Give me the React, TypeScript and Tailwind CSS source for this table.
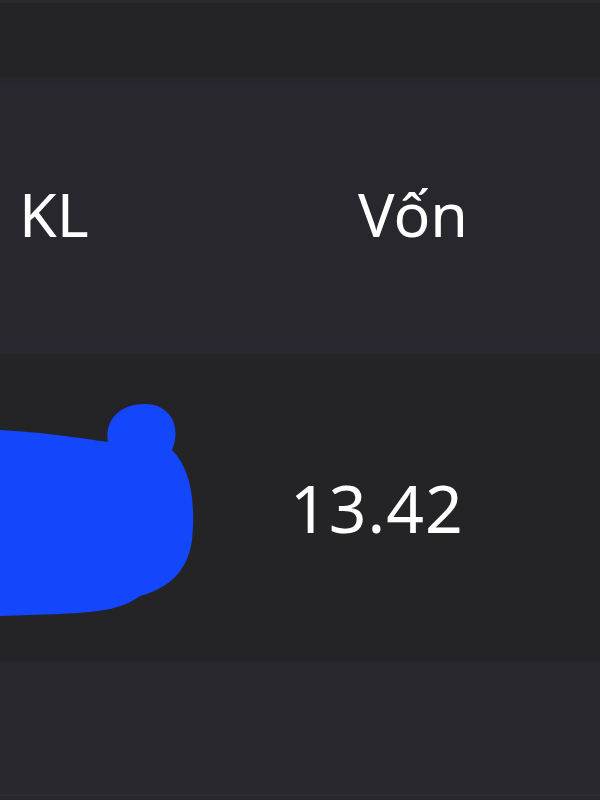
import React from "react";

export default function App() {
  return (
    <div
      className="w-[600px] h-[800px] overflow-hidden flex flex-col bg-[#28272d] text-white"
      style={{ fontFamily: '"Noto Sans", "Open Sans", sans-serif' }}
    >
      <div className="h-[3px] bg-[#2a292f]" />
      <div className="h-[74px] bg-[#242426]" />
      <div className="h-[18px] bg-gradient-to-b from-[#262529] to-[#2a2932]" />
      <div className="h-[245px] bg-[#28272d] flex items-center">
        <div className="w-[360px] pl-[19px] text-[61px] leading-none pb-[9px]">KL</div>
        <div className="text-[61px] leading-none pb-[9px] -ml-[2px]">Vốn</div>
      </div>
      <div className="h-[14px] bg-gradient-to-b from-[#29283200] to-[#292833]" />
      <div className="h-[306px] bg-[#242427] relative flex items-center">
        <svg
          className="absolute left-0 top-[46px]"
          width="200"
          height="220"
          viewBox="0 0 200 220"
        >
          <path
            d="M0 30 C40 32 80 38 108 42 C104 20 120 4 145 4 C170 4 182 26 172 50 C190 68 196 100 192 140 C188 170 170 188 140 196 C120 210 100 212 60 214 L0 216 Z"
            fill="#1446fb"
          />
        </svg>
        <div className="w-[290px]" />
        <div className="text-[66px] leading-none tracking-[1px]">13.42</div>
      </div>
      <div className="h-[6px] bg-gradient-to-b from-[#242427] to-[#29282e]" />
      <div className="h-[128px] bg-[#29282e]" />
      <div className="h-[2px] bg-[#2e2d33]" />
      <div className="flex-1 bg-[#29282e]" />
    </div>
  );
}
